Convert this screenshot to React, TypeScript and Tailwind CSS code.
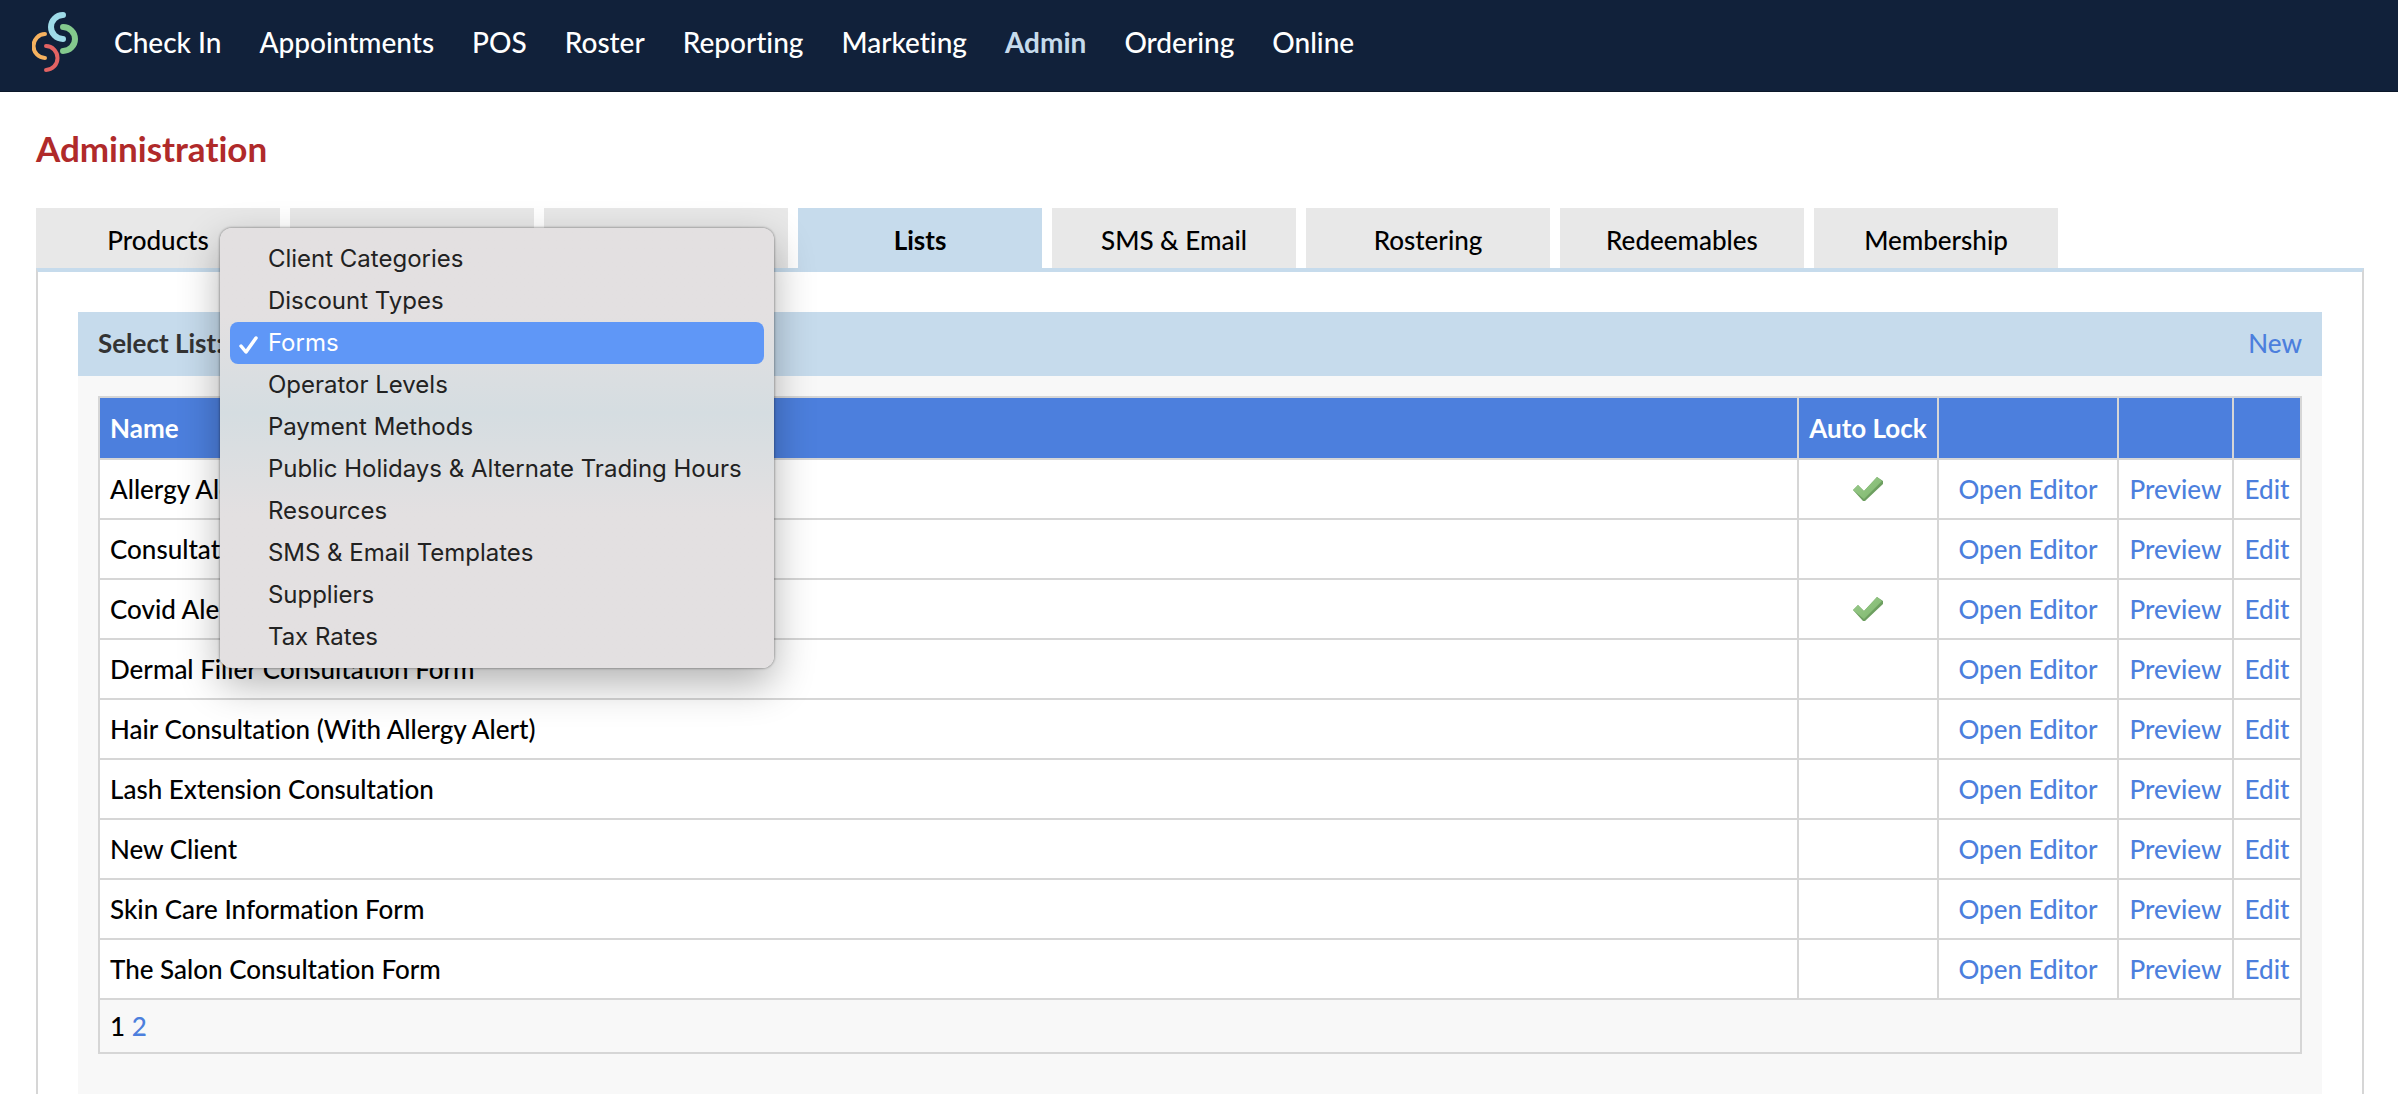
import React from "react";

const nav = ["Check In", "Appointments", "POS", "Roster", "Reporting", "Marketing", "Admin", "Ordering", "Online"];

const tabs = [
  { id: "products", label: "Products" },
  { id: "services", label: "" },
  { id: "clients", label: "" },
  { id: "lists", label: "Lists" },
  { id: "messages", label: "SMS & Email" },
  { id: "rostering", label: "Rostering" },
  { id: "redeemables", label: "Redeemables" },
  { id: "membership", label: "Membership" },
];

const lists = [
  "Client Categories",
  "Discount Types",
  "Forms",
  "Operator Levels",
  "Payment Methods",
  "Public Holidays & Alternate Trading Hours",
  "Resources",
  "SMS & Email Templates",
  "Suppliers",
  "Tax Rates",
];

const forms = [
  { name: "Allergy Alert", locked: true },
  { name: "Consultation", locked: false },
  { name: "Covid Alert", locked: true },
  { name: "Dermal Filler Consultation Form", locked: false },
  { name: "Hair Consultation (With Allergy Alert)", locked: false },
  { name: "Lash Extension Consultation", locked: false },
  { name: "New Client", locked: false },
  { name: "Skin Care Information Form", locked: false },
  { name: "The Salon Consultation Form", locked: false },
];

function Logo() {
  return (
    <svg className="h-15 w-12" viewBox="0 0 48 60" fill="none" strokeLinecap="round" aria-hidden="true">
      <path d="M31 3A12 12 0 0 0 31 27" stroke="#9fdbe8" strokeWidth="6" />
      <path d="M31 15A12 12 0 0 1 31 39" stroke="#84c98d" strokeWidth="6" />
      <path d="M13 22A11.5 12 0 0 0 13 46" stroke="#f6b25f" strokeWidth="4" />
      <path d="M14 34A11.5 12 0 0 1 14 58" stroke="#e36363" strokeWidth="4" />
    </svg>
  );
}

function Tick() {
  return (
    <svg className="mx-auto h-8 w-8" viewBox="0 0 32 32" role="img" aria-label="Yes">
      <defs>
        <linearGradient id="tick" x1="0" y1="0" x2="1" y2="1">
          <stop offset="0" stopColor="#9ccb8d" />
          <stop offset="1" stopColor="#7db76c" />
        </linearGradient>
      </defs>
      <path d="M1 17L6 12L12 18L25 4L31 8V11L13 28H11Z" fill="#6d9f60" />
      <path d="M1 17L6 12L12 18L25 4L30 8L12 26Z" fill="url(#tick)" />
    </svg>
  );
}

function ListMenu() {
  return (
    <ul
      role="listbox"
      aria-label="Select List"
      className="absolute -top-[95px] -left-[3px] z-10 w-[554px] rounded-xl bg-linear-to-b from-[#e3e0e1] from-20% via-[#d5dde1] via-42% to-[#e3e0e1] to-65% px-[10px] py-[10px] font-['Inter',sans-serif] text-2xl text-[#222] shadow-[0_0_2px_1px_rgba(0,0,0,0.25),0_16px_40px_rgba(0,0,0,0.3)]"
    >
      {lists.map((item) => (
        <li key={item} role="option" aria-selected={item === "Forms"}>
          <button
            type="button"
            className={
              item === "Forms"
                ? "flex h-[42px] w-full items-center rounded-lg bg-[#5f97f7] text-white"
                : "flex h-[42px] w-full items-center"
            }
          >
            <span className="w-[38px] shrink-0 pl-2">
              {item === "Forms" && (
                <svg className="h-6 w-5" viewBox="0 0 20 24" fill="none" stroke="currentColor" strokeWidth="3.5" strokeLinecap="round" strokeLinejoin="round" aria-hidden="true">
                  <path d="M3 15L8 21L18 7" />
                </svg>
              )}
            </span>
            <span className="whitespace-nowrap">{item}</span>
          </button>
        </li>
      ))}
    </ul>
  );
}

export default function App() {
  return (
    <div className="min-h-screen bg-white font-['Lato',sans-serif] text-[26px] leading-8 text-black [font-variant-ligatures:no-common-ligatures]">
      <header className="flex h-[92px] items-start border-b border-[#0b1729] bg-[#11213a] pt-3 pl-8">
        <Logo />
        <nav className="ml-[34px] flex gap-[38px] pt-[14px] text-[28px] font-medium text-white">
          {nav.map((item) => (
            <a key={item} href="#" className={item === "Admin" ? "font-bold text-[#c6dbec]" : ""}>
              {item}
            </a>
          ))}
        </nav>
      </header>

      <main className="pr-[34px] pl-9">
        <h1 className="pt-9 pb-10 text-[35px] leading-10 font-bold text-[#b02a2a]">Administration</h1>

        <div role="tablist" className="flex gap-[10px]">
          {tabs.map((tab) => (
            <button
              key={tab.id}
              type="button"
              role="tab"
              aria-selected={tab.id === "lists"}
              aria-label={tab.label || tab.id}
              className={
                tab.id === "lists"
                  ? "h-[60px] w-[244px] bg-[#c6dbec] pt-1 font-bold"
                  : "h-[60px] w-[244px] bg-[#e8e8e8] pt-1 font-medium"
              }
            >
              {tab.label}
            </button>
          ))}
        </div>

        <section className="border-x-2 border-t-4 border-x-[#d6d6d6] border-t-[#c6dbec] px-10 pt-10">
          <div className="bg-[#f8f8f8] pb-10">
            <div className="flex h-16 items-center bg-[#c6dbec] px-5 pb-[2px]">
              <label htmlFor="list" className="font-bold text-[#333]">
                Select List:
              </label>
              <div className="relative">
                <select id="list" defaultValue="Forms" className="ml-2 h-10 w-[480px] rounded border border-[#bbb] bg-white text-2xl">
                  {lists.map((item) => (
                    <option key={item}>{item}</option>
                  ))}
                </select>
                <ListMenu />
              </div>
              <a href="#" className="ml-auto font-medium text-[#4c7fdd]">
                New
              </a>
            </div>

            <div className="px-5 pt-5">
              <table className="w-full border-separate border-spacing-0 border-t-2 border-l-2 border-[#d6d6d6] bg-white font-medium">
                <thead>
                  <tr className="h-[62px] bg-[#4c7fdd] text-left text-white">
                    <th className="border-r-2 border-b-2 border-[#d6d6d6] px-[10px]">Name</th>
                    <th className="w-[140px] border-r-2 border-b-2 border-[#d6d6d6] text-center whitespace-nowrap">Auto Lock</th>
                    <th className="w-[180px] border-r-2 border-b-2 border-[#d6d6d6]" />
                    <th className="w-[115px] border-r-2 border-b-2 border-[#d6d6d6]" />
                    <th className="w-[68px] border-r-2 border-b-2 border-[#d6d6d6]" />
                  </tr>
                </thead>
                <tbody>
                  {forms.map((form) => (
                    <tr key={form.name} className="h-[60px]">
                      <td className="border-r-2 border-b-2 border-[#d6d6d6] px-[10px]">{form.name}</td>
                      <td className="border-r-2 border-b-2 border-[#d6d6d6]">{form.locked && <Tick />}</td>
                      {["Open Editor", "Preview", "Edit"].map((action) => (
                        <td key={action} className="border-r-2 border-b-2 border-[#d6d6d6] text-center whitespace-nowrap">
                          <a href="#" className="text-[#4c7fdd]">
                            {action}
                          </a>
                        </td>
                      ))}
                    </tr>
                  ))}
                </tbody>
                <tfoot>
                  <tr className="h-[54px] bg-[#f8f8f8]">
                    <td colSpan={5} className="border-r-2 border-b-2 border-[#d6d6d6] px-[10px]">
                      1{" "}
                      <a href="#" className="text-[#4c7fdd]">
                        2
                      </a>
                    </td>
                  </tr>
                </tfoot>
              </table>
            </div>
          </div>
        </section>
      </main>
    </div>
  );
}
